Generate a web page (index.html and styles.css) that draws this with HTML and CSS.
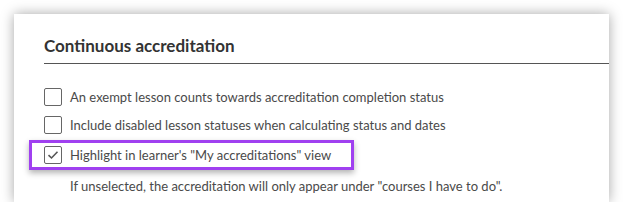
FILE: index.html
```html
<!DOCTYPE html>
<html lang="en">
<head>
    <meta charset="UTF-8">
    <title>Continuous accreditation</title>
    <link rel="stylesheet" href="styles.css">
</head>
<body>
    <div class="card">
        <h2 class="title">Continuous accreditation</h2>

        <div class="options">
            <label class="option">
                <span class="box"></span>
                An exempt lesson counts towards accreditation completion status
            </label>
            <label class="option">
                <span class="box"></span>
                Include disabled lesson statuses when calculating status and dates
            </label>
            <label class="option highlight">
                <span class="box checked">
                    <svg width="12" height="10" viewBox="0 0 12 10"><path d="M1.5 5.2 L4.5 8 L10.5 1.8" fill="none" stroke="#555" stroke-width="1.6"/></svg>
                </span>
                Highlight in learner's "My accreditations" view
            </label>
            <p class="hint">If unselected, the accreditation will only appear under "courses I have to do".</p>
        </div>
    </div>
</body>
</html>
```

FILE: styles.css
```css
body {
    margin: 0;
    background: #fff;
    font-family: 'Lato', 'Liberation Sans', sans-serif;
    color: #4a4a4a;
}

.card {
    margin: 14px 14px 0 14px;
    height: 188px;
    box-sizing: border-box;
    background: #fff;
    box-shadow: 0 0 12px rgba(0, 0, 0, 0.35);
    padding: 21px 0 0 30px;
}

.title {
    margin: 0;
    font-size: 17px;
    font-weight: bold;
    color: #333;
    line-height: 22px;
    padding-bottom: 6px;
    border-bottom: 1px solid #555;
}

.options {
    padding-top: 19px;
}

.option {
    display: flex;
    align-items: center;
    gap: 8px;
    font-size: 13px;
    height: 28px;
}

.box {
    width: 16px;
    height: 16px;
    border: 1px solid #666;
    border-radius: 2px;
    display: flex;
    align-items: center;
    justify-content: center;
}

.highlight {
    width: 307px;
    height: 24px;
    margin: 1px 0 0 -15px;
    padding-left: 12px;
    border: 3px solid #a040f0;
    box-shadow: 0 3px 6px rgba(0, 0, 0, 0.3);
}

.hint {
    margin: 8px 0 0 26px;
    font-size: 13px;
    line-height: 16px;
}
```
